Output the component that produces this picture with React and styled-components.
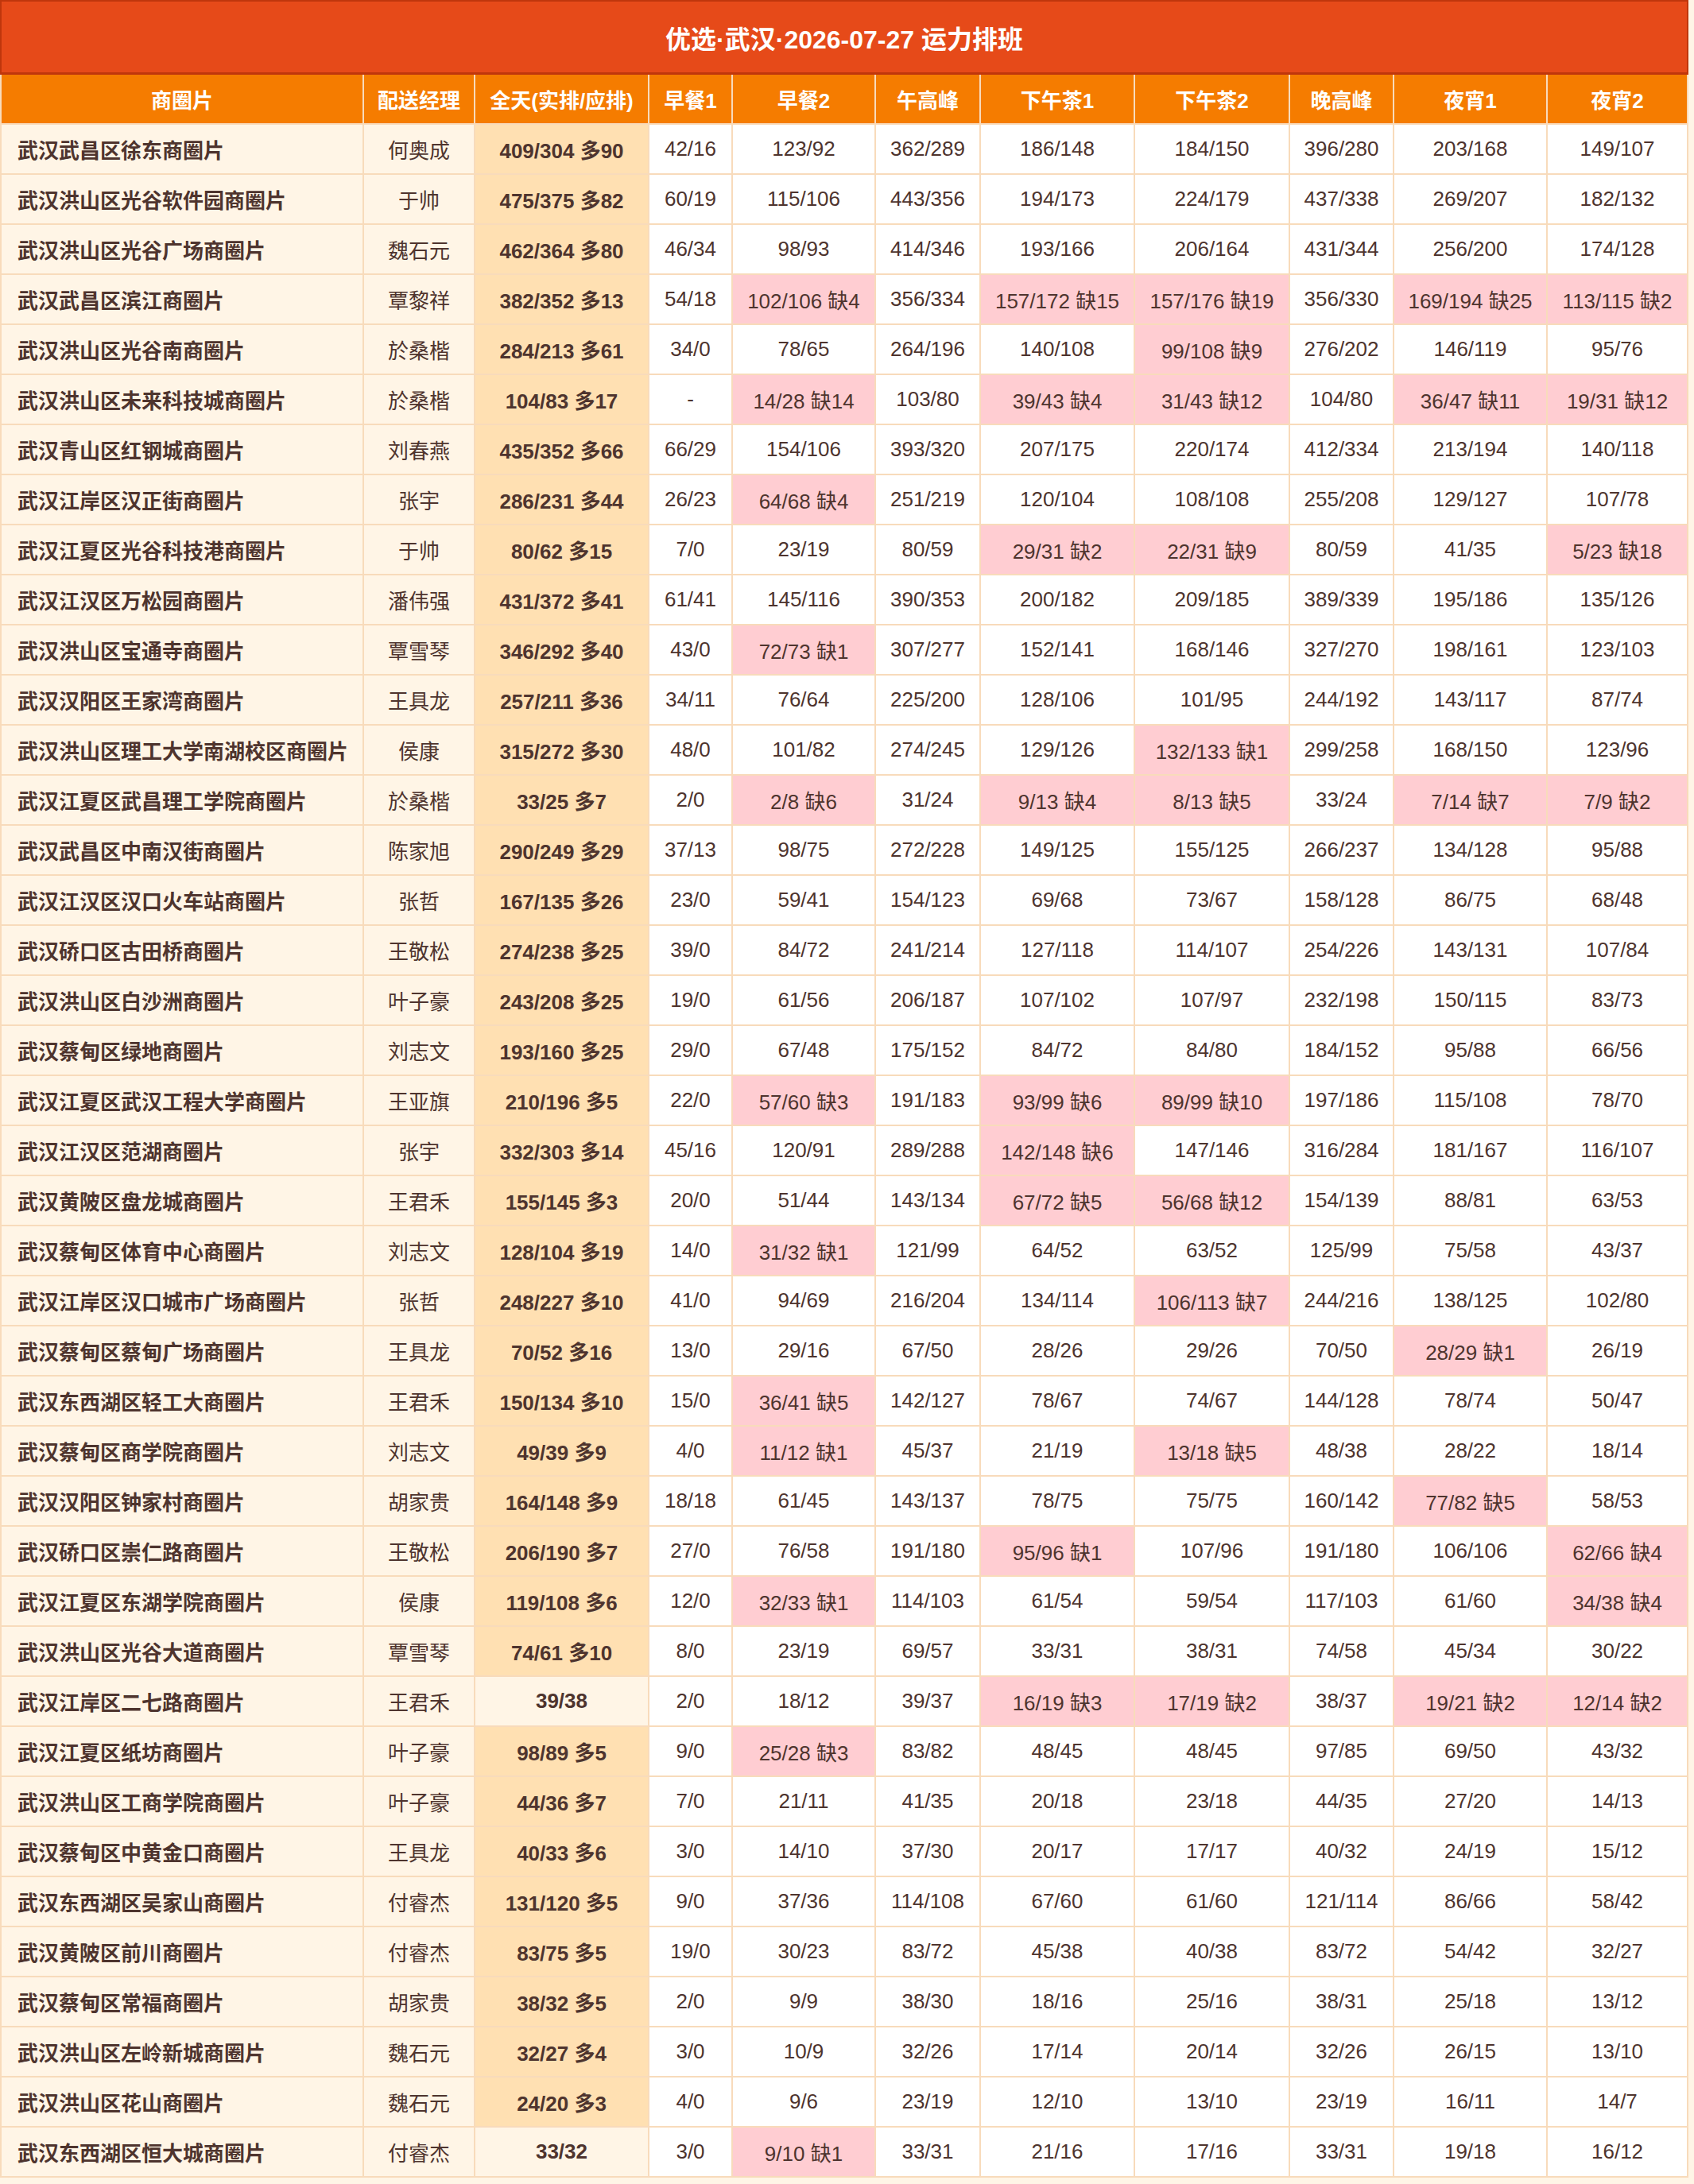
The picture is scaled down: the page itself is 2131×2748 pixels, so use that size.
import React from 'react';
import styled, { createGlobalStyle } from 'styled-components';

const GlobalStyle = createGlobalStyle`
  html, body {
    margin: 0;
    padding: 0;
    background: #fff5e6;
  }
  body {
    min-height: 2748px;
    font-family: "Liberation Sans", "Noto Sans CJK SC", sans-serif;
    color: #4e342e;
  }
`;

const COLS = [456, 140, 219, 105, 180, 132, 194, 195, 131, 193, 177];
const HEADERS = ['商圈片', '配送经理', '全天(实排/应排)', '早餐1', '早餐2', '午高峰', '下午茶1', '下午茶2', '晚高峰', '夜宵1', '夜宵2'];

// name | manager | total | 8 slots
const RAW = `武汉武昌区徐东商圈片|何奥成|409/304 多90|42/16|123/92|362/289|186/148|184/150|396/280|203/168|149/107
武汉洪山区光谷软件园商圈片|于帅|475/375 多82|60/19|115/106|443/356|194/173|224/179|437/338|269/207|182/132
武汉洪山区光谷广场商圈片|魏石元|462/364 多80|46/34|98/93|414/346|193/166|206/164|431/344|256/200|174/128
武汉武昌区滨江商圈片|覃黎祥|382/352 多13|54/18|102/106 缺4|356/334|157/172 缺15|157/176 缺19|356/330|169/194 缺25|113/115 缺2
武汉洪山区光谷南商圈片|於桑楷|284/213 多61|34/0|78/65|264/196|140/108|99/108 缺9|276/202|146/119|95/76
武汉洪山区未来科技城商圈片|於桑楷|104/83 多17|-|14/28 缺14|103/80|39/43 缺4|31/43 缺12|104/80|36/47 缺11|19/31 缺12
武汉青山区红钢城商圈片|刘春燕|435/352 多66|66/29|154/106|393/320|207/175|220/174|412/334|213/194|140/118
武汉江岸区汉正街商圈片|张宇|286/231 多44|26/23|64/68 缺4|251/219|120/104|108/108|255/208|129/127|107/78
武汉江夏区光谷科技港商圈片|于帅|80/62 多15|7/0|23/19|80/59|29/31 缺2|22/31 缺9|80/59|41/35|5/23 缺18
武汉江汉区万松园商圈片|潘伟强|431/372 多41|61/41|145/116|390/353|200/182|209/185|389/339|195/186|135/126
武汉洪山区宝通寺商圈片|覃雪琴|346/292 多40|43/0|72/73 缺1|307/277|152/141|168/146|327/270|198/161|123/103
武汉汉阳区王家湾商圈片|王具龙|257/211 多36|34/11|76/64|225/200|128/106|101/95|244/192|143/117|87/74
武汉洪山区理工大学南湖校区商圈片|侯康|315/272 多30|48/0|101/82|274/245|129/126|132/133 缺1|299/258|168/150|123/96
武汉江夏区武昌理工学院商圈片|於桑楷|33/25 多7|2/0|2/8 缺6|31/24|9/13 缺4|8/13 缺5|33/24|7/14 缺7|7/9 缺2
武汉武昌区中南汉街商圈片|陈家旭|290/249 多29|37/13|98/75|272/228|149/125|155/125|266/237|134/128|95/88
武汉江汉区汉口火车站商圈片|张哲|167/135 多26|23/0|59/41|154/123|69/68|73/67|158/128|86/75|68/48
武汉硚口区古田桥商圈片|王敬松|274/238 多25|39/0|84/72|241/214|127/118|114/107|254/226|143/131|107/84
武汉洪山区白沙洲商圈片|叶子豪|243/208 多25|19/0|61/56|206/187|107/102|107/97|232/198|150/115|83/73
武汉蔡甸区绿地商圈片|刘志文|193/160 多25|29/0|67/48|175/152|84/72|84/80|184/152|95/88|66/56
武汉江夏区武汉工程大学商圈片|王亚旗|210/196 多5|22/0|57/60 缺3|191/183|93/99 缺6|89/99 缺10|197/186|115/108|78/70
武汉江汉区范湖商圈片|张宇|332/303 多14|45/16|120/91|289/288|142/148 缺6|147/146|316/284|181/167|116/107
武汉黄陂区盘龙城商圈片|王君禾|155/145 多3|20/0|51/44|143/134|67/72 缺5|56/68 缺12|154/139|88/81|63/53
武汉蔡甸区体育中心商圈片|刘志文|128/104 多19|14/0|31/32 缺1|121/99|64/52|63/52|125/99|75/58|43/37
武汉江岸区汉口城市广场商圈片|张哲|248/227 多10|41/0|94/69|216/204|134/114|106/113 缺7|244/216|138/125|102/80
武汉蔡甸区蔡甸广场商圈片|王具龙|70/52 多16|13/0|29/16|67/50|28/26|29/26|70/50|28/29 缺1|26/19
武汉东西湖区轻工大商圈片|王君禾|150/134 多10|15/0|36/41 缺5|142/127|78/67|74/67|144/128|78/74|50/47
武汉蔡甸区商学院商圈片|刘志文|49/39 多9|4/0|11/12 缺1|45/37|21/19|13/18 缺5|48/38|28/22|18/14
武汉汉阳区钟家村商圈片|胡家贵|164/148 多9|18/18|61/45|143/137|78/75|75/75|160/142|77/82 缺5|58/53
武汉硚口区崇仁路商圈片|王敬松|206/190 多7|27/0|76/58|191/180|95/96 缺1|107/96|191/180|106/106|62/66 缺4
武汉江夏区东湖学院商圈片|侯康|119/108 多6|12/0|32/33 缺1|114/103|61/54|59/54|117/103|61/60|34/38 缺4
武汉洪山区光谷大道商圈片|覃雪琴|74/61 多10|8/0|23/19|69/57|33/31|38/31|74/58|45/34|30/22
武汉江岸区二七路商圈片|王君禾|39/38|2/0|18/12|39/37|16/19 缺3|17/19 缺2|38/37|19/21 缺2|12/14 缺2
武汉江夏区纸坊商圈片|叶子豪|98/89 多5|9/0|25/28 缺3|83/82|48/45|48/45|97/85|69/50|43/32
武汉洪山区工商学院商圈片|叶子豪|44/36 多7|7/0|21/11|41/35|20/18|23/18|44/35|27/20|14/13
武汉蔡甸区中黄金口商圈片|王具龙|40/33 多6|3/0|14/10|37/30|20/17|17/17|40/32|24/19|15/12
武汉东西湖区吴家山商圈片|付睿杰|131/120 多5|9/0|37/36|114/108|67/60|61/60|121/114|86/66|58/42
武汉黄陂区前川商圈片|付睿杰|83/75 多5|19/0|30/23|83/72|45/38|40/38|83/72|54/42|32/27
武汉蔡甸区常福商圈片|胡家贵|38/32 多5|2/0|9/9|38/30|18/16|25/16|38/31|25/18|13/12
武汉洪山区左岭新城商圈片|魏石元|32/27 多4|3/0|10/9|32/26|17/14|20/14|32/26|26/15|13/10
武汉洪山区花山商圈片|魏石元|24/20 多3|4/0|9/6|23/19|12/10|13/10|23/19|16/11|14/7
武汉东西湖区恒大城商圈片|付睿杰|33/32|3/0|9/10 缺1|33/31|21/16|17/16|33/31|19/18|16/12`;

const ROWS = RAW.split('\n').map((line) => line.split('|'));

const Page = styled.div`
  width: 2122px;
`;

const Table = styled.table`
  width: 2122px;
  table-layout: fixed;
  border-collapse: collapse;
  border: 2px solid #f8dbbb;
`;

const TitleCell = styled.th`
  height: 89px;
  padding: 0;
  background: #e64a19;
  color: #ffffff;
  font-size: 32px;
  font-weight: 700;
  text-align: center;
  border: 2px solid #bf360c;
  border-bottom-width: 3px;
`;

const HeadCell = styled.th`
  height: 61px;
  padding: 0 4px;
  background: #f57c00;
  color: #ffffff;
  font-size: 26px;
  font-weight: 700;
  text-align: center;
  border: 2px solid #f8dbbb;
  white-space: nowrap;
`;

const tones = {
  cream: '#fff5e6',
  peach: '#ffe0b2',
  pink: '#ffcdd2',
  white: '#ffffff',
};

const Cell = styled.td`
  height: 61px;
  padding: 0 ${(p) => (p.$left ? '20px' : '4px')};
  background: ${(p) => tones[p.$tone || 'white']};
  color: #4e342e;
  font-size: 26px;
  font-weight: ${(p) => (p.$bold ? 700 : 400)};
  text-align: ${(p) => (p.$left ? 'left' : 'center')};
  vertical-align: middle;
  border: 2px solid #f8dbbb;
  white-space: nowrap;
`;

function DataRow({ row }) {
  const [name, manager, total, ...slots] = row;
  return (
    <tr>
      <Cell $left $bold $tone="cream">{name}</Cell>
      <Cell $tone="cream">{manager}</Cell>
      <Cell $bold $tone={total.includes('多') ? 'peach' : 'cream'}>{total}</Cell>
      {slots.map((s, i) => (
        <Cell key={i} $tone={s.includes('缺') ? 'pink' : 'white'}>{s}</Cell>
      ))}
    </tr>
  );
}

export default function App() {
  return (
    <Page>
      <GlobalStyle />
      <Table>
        <colgroup>
          {COLS.map((w, i) => (
            <col key={i} style={{ width: w }} />
          ))}
        </colgroup>
        <thead>
          <tr>
            <TitleCell colSpan={11}>优选·武汉·2026-07-27 运力排班</TitleCell>
          </tr>
          <tr>
            {HEADERS.map((h) => (
              <HeadCell key={h}>{h}</HeadCell>
            ))}
          </tr>
        </thead>
        <tbody>
          {ROWS.map((r) => (
            <DataRow key={r[0]} row={r} />
          ))}
        </tbody>
      </Table>
    </Page>
  );
}
